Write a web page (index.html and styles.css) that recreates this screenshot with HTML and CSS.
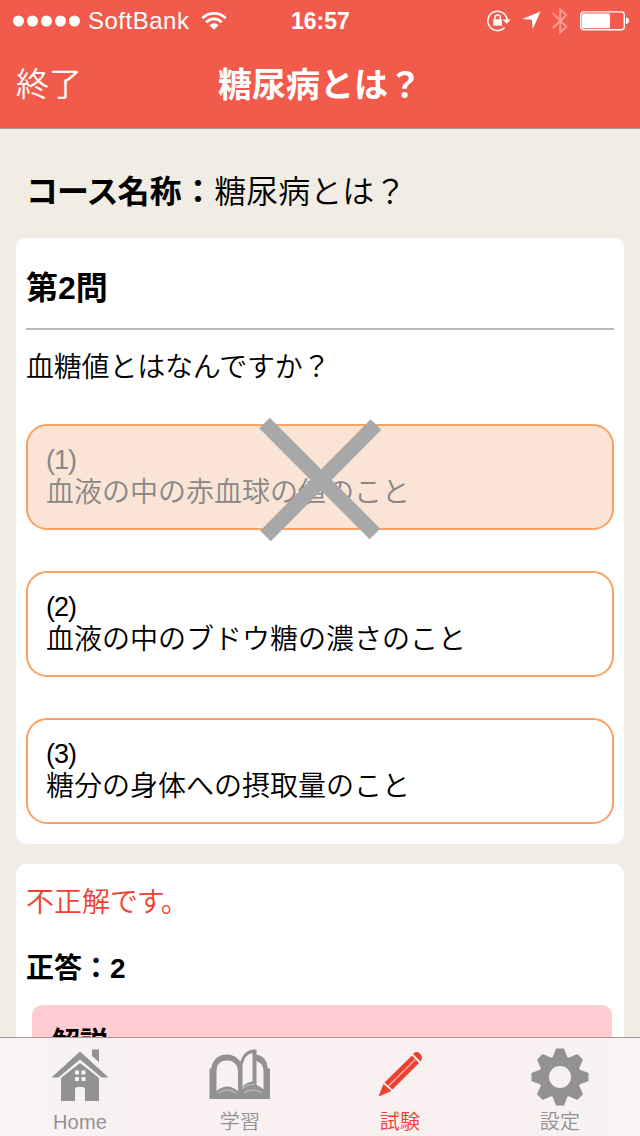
FILE: index.html
```html
<!DOCTYPE html>
<html lang="ja">
<head>
<meta charset="UTF-8">
<meta name="viewport" content="width=device-width, initial-scale=1.0">
<title>糖尿病とは？</title>
<link rel="stylesheet" href="styles.css">
</head>
<body>
<header>
    <div class="status">
        <div class="carrier">
            <svg width="68" height="12" viewBox="0 0 68 12" fill="#fff">
                <circle cx="5.5" cy="6" r="5.5"/>
                <circle cx="19.5" cy="6" r="5.5"/>
                <circle cx="33.5" cy="6" r="5.5"/>
                <circle cx="47.5" cy="6" r="5.5"/>
                <circle cx="61.5" cy="6" r="5.5"/>
            </svg>
            <span class="name">SoftBank</span>
            <svg width="26" height="20" viewBox="0 0 26 20" fill="none" stroke="#fff" stroke-width="2.8">
                <path d="M1.3 7.2Q6.500 2.400 13 2.400T24.700 7.200"/>
                <path d="M5.3 11.4Q8.500 7.800 13 7.800T20.700 11.400"/>
                <path d="M8.4 14.2Q13 10.400 17.600 14.200L13 18.800Z" fill="#fff" stroke="none"/>
            </svg>
        </div>
        <div class="time">16:57</div>
        <div class="indicators">
            <svg width="24" height="22" viewBox="0 0 24 22" fill="none" stroke="#fff">
                <path d="M20.2 10.2A9.7 9.7 0 1 0 17.6 17.6" stroke-width="1.5"/>
                <path d="M15.6 9.5H23.6L19.6 13.7Z" fill="#fff" stroke="none"/>
                <rect x="6.3" y="9.3" width="8.6" height="6.4" fill="#fff" stroke="none"/>
                <path d="M7.9 9.5V7.3Q7.9 5 10.6 5T13.3 7.3V9.5" stroke-width="1.4"/>
            </svg>
            <svg class="arrow" width="19" height="19" viewBox="0 0 19 19"><path d="M18.5.5L10.8 18.3L9.8 8.8L.3 8.1Z" fill="#fff"/></svg>
            <svg class="bluetooth" width="16" height="28" viewBox="0 0 16 28" fill="none" stroke="#fff" stroke-width="1.9"><path d="M.8 6.2L14.3 19.8L8.2 25.5V2.5L14.3 8.2L.8 21"/></svg>
            <svg class="battery" width="50" height="20" viewBox="0 0 50 20">
                <rect x=".7" y=".9" width="43.6" height="17.8" rx="3" fill="none" stroke="#fff" stroke-width="1.4"/>
                <rect x="2" y="2.5" width="28" height="14.7" rx="1" fill="#fff"/>
                <path d="M46 6.6Q49 7 49 9.8T46 13Z" fill="#fff"/>
            </svg>
        </div>
    </div>
    <nav>
        <a class="quit">終了</a>
        <h1>糖尿病とは？</h1>
    </nav>
</header>

<main>
    <p class="course"><b><span class="kana">コース</span>名称：</b>糖尿病とは？</p>

    <section class="card">
        <h2>第2問</h2>
        <p class="question">血糖値とはなんですか？</p>
        <div class="answer wrong">
            <div class="number">(1)</div>
            <div class="text">血液の中の赤血球の値のこと</div>
            <svg class="cross" width="124" height="126" viewBox="0 0 124 126" stroke="#a8a8a8" stroke-width="15">
                <path d="M6.5 7L117 118M118 8.5L7.5 120"/>
            </svg>
        </div>
        <div class="answer">
            <div class="number">(2)</div>
            <div class="text">血液の中のブドウ糖の濃さのこと</div>
        </div>
        <div class="answer">
            <div class="number">(3)</div>
            <div class="text">糖分の身体への摂取量のこと</div>
        </div>
    </section>

    <section class="card result">
        <p class="incorrect">不正解<span class="desu">です。</span></p>
        <p class="correct">正答：2</p>
        <div class="explain">解説</div>
    </section>
</main>

<footer>
    <a class="tab">
        <svg width="58" height="58" viewBox="0 0 58 58" fill="#929292">
            <path d="M41 3.5H48V16L41 10Z"/>
            <path d="M.5 31.5L29 5.500L57.5 31.5H50.5L29 13.5L7.5 31.5Z"/>
            <path d="M10 55V32L29 17L48 32V55H34V43.5Q34 41 32 41H26Q24 41 24 43.5V55Z"/>
            <path d="M24 24.5H28V28.5H24ZM30.5 24.5H34.5V28.5H30.5ZM24 31H28V35H24ZM30.5 31H34.5V35H30.5Z" fill="#f8f0f1"/>
        </svg>
        <span>Home</span>
    </a>
    <a class="tab">
        <svg width="62" height="58" viewBox="0 0 62 58">
            <path d="M.500 53V22.500H2.200Q3 16 8 11.500Q12 8.500 18 8.500Q26 8.500 31.500 15.500Q35 4.500 43.500 3.500H47.500V8.500Q57.500 10 59 22.500H61V53Z" fill="#929292"/>
            <path d="M7.500 45V24Q8 14.500 18 14.500Q27.500 14.500 29 24V45Q18 36 7.500 45Z" fill="#f8f0f1"/>
            <path d="M33.500 41V19Q35.500 8.500 43.500 7V35.500Q36 36.500 33.500 41ZM47.500 15Q53.500 17 54.500 24V43.500Q51 40 47.500 39Z" fill="#f8f0f1"/>
            <path d="M9 47Q18 41 27 47M33 42.500Q38 38 46 38.500M35 47Q44 41 53 47" fill="none" stroke="#b9b5b5" stroke-width="1.3"/>
        </svg>
        <span>学習</span>
    </a>
    <a class="tab active">
        <svg width="46" height="58" viewBox="0 0 46 58" fill="#f04130">
            <path d="M1.500 50.5L6.500 38L14.500 45Z"/>
            <path d="M7.500 36.500L35 9.5L42 17L15.5 43.5Z"/>
            <path d="M36 8Q39 4.5 43 7.5Q46.500 11 43.700 15.500Z"/>
            <path d="M11.500 40L38.500 13.300" fill="none" stroke="#f9b5b0" stroke-width="1.2"/>
        </svg>
        <span>試験</span>
    </a>
    <a class="tab">
        <svg class="gear" width="58" height="58" viewBox="0 0 58 58">
            <g fill="#929292">
                <circle cx="29" cy="29" r="21"/>
                <path id="tooth" d="M21 11L25 .5H33L37 11V47L33 57.5H25L21 47Z"/>
                <use href="#tooth" transform="rotate(45 29 29)"/>
                <use href="#tooth" transform="rotate(90 29 29)"/>
                <use href="#tooth" transform="rotate(135 29 29)"/>
            </g>
            <circle cx="29" cy="29" r="11" fill="#f8f1f2"/>
        </svg>
        <span>設定</span>
    </a>
</footer>
</body>
</html>
```
FILE: styles.css
```css
* {
    box-sizing: border-box;
}
body {
    margin: 0;
    height: 1136px;
    display: flex;
    flex-direction: column;
    overflow: hidden;
    background-color: #f1ece4;
    color: #000;
    font-family: "Liberation Sans", "Noto Sans CJK JP", sans-serif;
    font-weight: 350;
}
h1, h2, p {
    margin: 0;
}
svg {
    display: block;
    flex: none;
}

/* top bar */
header {
    flex: none;
    height: 129px;
    background-color: #f25b4c;
    border-bottom: 1px solid #a39c92;
    color: #fff;
}
.status {
    height: 41px;
    padding: 0 11px 0 13px;
    display: grid;
    grid-template-columns: 1fr 60px 1fr;
    align-items: center;
}
.carrier, .indicators {
    display: flex;
    align-items: center;
}
.name {
    margin: 1px 12px 0 7px;
    font-size: 24px;
    line-height: 28px;
    letter-spacing: 0.5px;
}
.time {
    margin-top: 1px;
    padding-right: 5px;
    font-size: 23px;
    line-height: 28px;
    font-weight: bold;
    text-align: center;
    white-space: nowrap;
}
.indicators {
    justify-content: flex-end;
}
.arrow {
    margin-left: 11px;
}
.bluetooth {
    margin-left: 11px;
    opacity: 0.4;
}
.battery {
    margin: 0 -1px 0 12px;
}
nav {
    height: 87px;
    padding: 0 16px;
    display: grid;
    grid-template-columns: 1fr auto 1fr;
    align-items: center;
}
.quit {
    font-size: 33px;
    line-height: 40px;
}
h1 {
    font-size: 34px;
    line-height: 40px;
}

/* scrolling content */
main {
    flex: 1;
    min-height: 0;
    overflow: hidden;
    padding: 43px 16px 0;
}
.course {
    padding-left: 10px;
    font-size: 32px;
    line-height: 40px;
    margin-bottom: 26px;
}
.course b {
    letter-spacing: 0.3px;
}
.course .kana {
    letter-spacing: -1px;
}
.card {
    height: 606px;
    padding: 30px 10px 0;
    background-color: #fff;
    border-radius: 10px;
}
h2 {
    height: 62px;
    font-size: 32px;
    line-height: 40px;
    border-bottom: 2px solid #b8b8b8;
}
.question {
    margin: 21px 0 40px;
    font-size: 28px;
    line-height: 33px;
    letter-spacing: -0.2px;
}
.answer {
    position: relative;
    height: 106px;
    margin-bottom: 41px;
    padding: 18px 18px 0;
    border: 2px solid #fda163;
    border-radius: 21px;
    font-size: 28px;
    line-height: 32px;
}
.number {
    font-size: 27px;
    letter-spacing: -1px;
}
.text {
    padding-top: 1px;
}
.wrong {
    background-color: #fae4d6;
}
.wrong .number, .wrong .text {
    color: #878787;
}
.cross {
    position: absolute;
    left: 230px;
    top: -10px;
}
.result {
    margin-top: 20px;
    padding-top: 22px;
}
.incorrect {
    color: #f04130;
    font-size: 28px;
    line-height: 34px;
}
.desu {
    letter-spacing: -1.2px;
}
.correct {
    margin-top: 32px;
    font-size: 28px;
    line-height: 34px;
    font-weight: bold;
}
.explain {
    height: 200px;
    margin: 19px 2px 0 6px;
    padding: 21px 20px;
    background-color: #ffcdd1;
    border-radius: 10px;
    font-size: 28px;
    line-height: 34px;
    font-weight: bold;
}

/* tab bar */
footer {
    flex: none;
    height: 99px;
    display: flex;
    border-top: 1px solid #a69698;
    background: linear-gradient(90deg, #f7f5f4, #f8f0f1 20%, #f8f0f1 85%, #f7f5f4);
}
.tab {
    flex: 1;
    display: flex;
    flex-direction: column;
    align-items: center;
    padding-top: 8px;
    color: #929292;
    font-size: 20px;
    line-height: 24px;
}
.tab span {
    margin-top: 6px;
    letter-spacing: 0.2px;
}
.gear {
    margin: 2px 0 -2px;
}
.active {
    color: #f04130;
}
```
